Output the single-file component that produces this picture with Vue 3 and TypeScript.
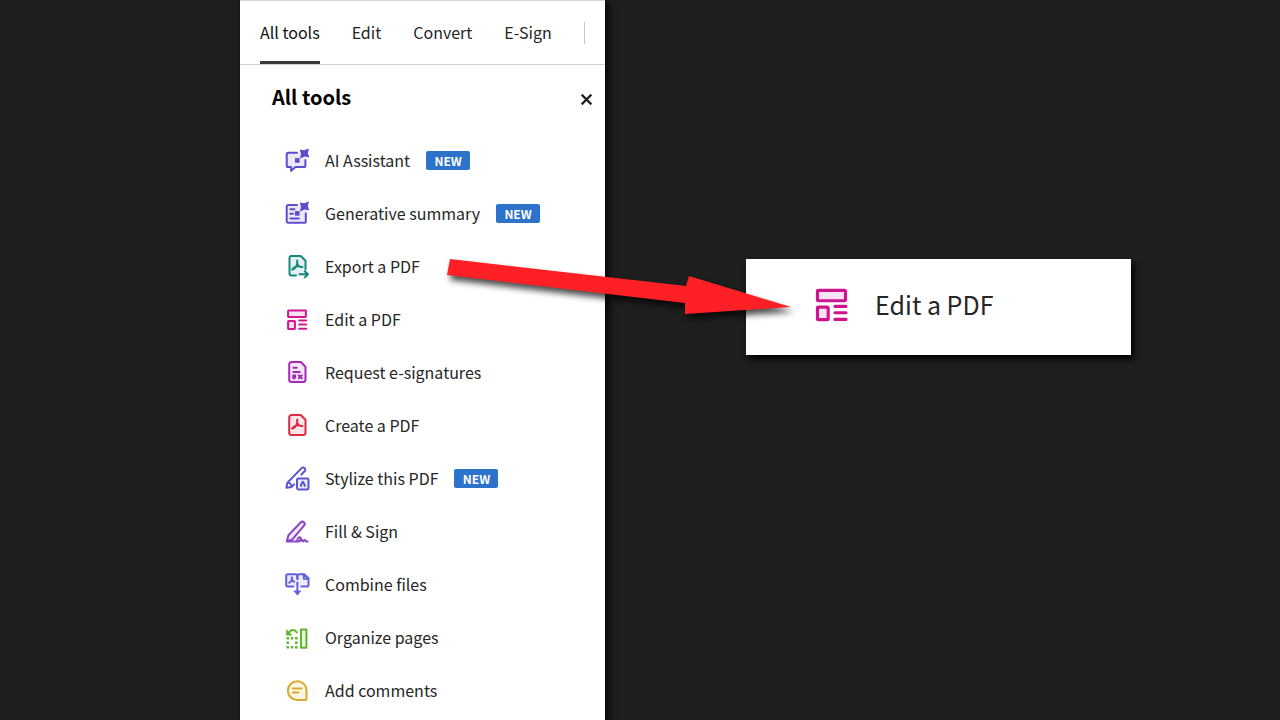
<script setup lang="ts">
import { ref } from 'vue'

interface Tool {
  id: string
  label: string
  color: string
  isNew?: boolean
  paths: string[]
  fills?: string[]
  tint?: string
}

const editPaths: string[] = [
  'M15.2 13.6h7M15.2 17.6h7M15.2 21.8h7',
]
const editShapes = 'M4.7 3.4h16.6a.6.6 0 0 1 .6.6v5.4a.6.6 0 0 1-.6.6H4.7a.6.6 0 0 1-.6-.6V4a.6.6 0 0 1 .6-.6ZM4.7 14h5.6a.6.6 0 0 1 .6.6v6.8a.6.6 0 0 1-.6.6H4.7a.6.6 0 0 1-.6-.6v-6.8a.6.6 0 0 1 .6-.6Z'
const star = 'M15.8 1.4l4.3.9 4.9-1.9-1.2 4.5 1.5 4.7-4.6-1-4.8 1.8 1-4.4z'
const spark = 'M11 10.1h4.6v4.6H11Z'
const acrobat = 'M13.2 6.4v3c0 2.3-3 6-5 6.2M13.2 9.4c.6 2.6 2.8 3.8 5.2 3.6M9.4 14c2.4-1.6 4.6-2 7.2-1.4'
const page = 'M7.5 2h9.3l4.7 4.7v13a2.3 2.3 0 0 1-2.3 2.3H7.5a2.3 2.3 0 0 1-2.3-2.3V4.3A2.3 2.3 0 0 1 7.5 2Z'

const tools: Tool[] = [
  {
    id: 'ai', label: 'AI Assistant', color: '#5b4cd0', isNew: true,
    tint: 'M3 5h13v4h6v10H12l-4 3v-3H3Z',
    paths: ['M13 4.8H4.3A1.6 1.6 0 0 0 2.7 6.4v11a1.6 1.6 0 0 0 1.6 1.6h2.8v3.7l4.4-3.7h8.3a1.6 1.6 0 0 0 1.6-1.6v-5.4'],
    fills: [star, spark],
  },
  {
    id: 'summary', label: 'Generative summary', color: '#5b4cd0', isNew: true,
    tint: 'M3 4h13v5h6v13H3Z',
    paths: ['M13 4H4.3a1.6 1.6 0 0 0-1.6 1.6v14.6a1.6 1.6 0 0 0 1.6 1.6h15.9a1.6 1.6 0 0 0 1.6-1.6v-8', 'M6.4 8.2h4M6.4 12.8h2.6M6.4 17.5h8.4'],
    fills: [star, spark],
  },
  {
    id: 'export', label: 'Export a PDF', color: '#16877f',
    tint: page,
    paths: ['M12 21.5H7.5a2 2 0 0 1-2-2V4a2 2 0 0 1 2-2h9.2l4.8 4.7v8.5', acrobat, 'M15.5 20.3h8M20.8 17.2l3.2 3.1-3.2 3.1'],
  },
  { id: 'edit', label: 'Edit a PDF', color: '#d51492', tint: editShapes, paths: [editShapes, ...editPaths] },
  {
    id: 'request', label: 'Request e-signatures', color: '#a52bb7',
    tint: page,
    paths: [page, 'M9.4 7.7h3.4M9.4 12h6.4', 'M14.8 15.4l3 3M17.8 15.4l-3 3'],
    fills: ['M8.2 14.4h3.8v3.3L10.1 20l-1.9-2.3Z'],
  },
  { id: 'create', label: 'Create a PDF', color: '#d92b42', tint: page, paths: [page, acrobat] },
  {
    id: 'stylize', label: 'Stylize this PDF', color: '#5b57cf', isNew: true,
    tint: 'M14 12h10v11H14Z',
    paths: [
      'M2.4 21.7l1-5L17.6 2.1c1-.9 2.3-.7 3.1.2.8.9.8 2-.1 3l-3.2 3.2M3.4 16.7c1.7-.5 4.5 1.8 4.3 4.2l-5.3.8M7.7 20.9l2.5-2.5',
      'M14.3 12.5h8.9a1.3 1.3 0 0 1 1.3 1.3v8.3a1.3 1.3 0 0 1-1.3 1.3h-8.9a1.3 1.3 0 0 1-1.3-1.3v-8.3a1.3 1.3 0 0 1 1.3-1.3Z',
      'M17 20v-1.3l1.8-3 1.8 3V20',
    ],
  },
  {
    id: 'fill', label: 'Fill & Sign', color: '#8a48c8',
    tint: 'M3 22l1.5-6L17 3l4 2L9 20Z',
    paths: ['M2.8 22.4l1.6-6.2L16.6 3.5c1.1-1.1 2.5-1 3.4-.2.9.9.9 2.2 0 3.3L8.4 20.4l-5.6 2h11.4', 'M13.2 22.2c-.4-2.6 2.2-5 3.4-3.5 1 1.5-1.6 3.6-1.6 3.6 2.2.2 2.2-1.8 3.1-1.5.8.4.1 1.6 1 1.6s.8-1.3 1.7-1.3.7 1.3 1.4 1.3h1.4'],
  },
  {
    id: 'combine', label: 'Combine files', color: '#6260d8',
    tint: 'M3 3h17l4 4v7H3Z',
    paths: ['M9.5 14.5H3.7a1.5 1.5 0 0 1-1.5-1.5V3.7a1.5 1.5 0 0 1 1.5-1.5h8a1.7 1.7 0 0 1 1.7 1.7v3.2', 'M13.4 7.1V3.9a1.7 1.7 0 0 1 1.7-1.7h5.2l4.2 4.1V13a1.5 1.5 0 0 1-1.5 1.5h-5.7M19.8 2.6v4.1h4.3', 'M13.4 10.5v11', 'M7.8 5.2v2c0 1.5-1.5 3.3-2.6 3.6M7.8 7.2c.6 1.5 1.4 2.3 2.4 2.5'],
    fills: ['M9.3 18.4h8.2l-4.1 5Z'],
  },
  {
    id: 'organize', label: 'Organize pages', color: '#5eb62c',
    tint: 'M17 5h6v17h-6Z',
    paths: ['M17 4.5h5.4v18.3H17Z', 'M5 7.6c1.6-3.2 6-3.4 7.8-.2'],
    fills: [
      'M2.2 4v6.4h6.5Z',
      'M2.5 12h2.5v2.5H2.5ZM6.8 12h2.5v2.5H6.8ZM11.1 12h2.5v2.5h-2.5Z',
      'M2.5 16.5h2.5V19H2.5ZM11.1 16.5h2.5V19h-2.5Z',
      'M2.5 21h2.5v2.5H2.5ZM6.8 21h2.5v2.5H6.8ZM11.1 21h2.5v2.5h-2.5Z',
    ],
  },
  {
    id: 'comments', label: 'Add comments', color: '#d9a92b',
    tint: 'M13.3 3.3a9.3 9.3 0 0 1 9.3 9.3v9.5h-9.3a9.3 9.3 0 0 1 0-18.8Z',
    paths: ['M13.3 3.2a9.2 9.2 0 0 1 9.2 9.2v8.6a1.1 1.1 0 0 1-1.1 1.1h-8.1a9.45 9.45 0 0 1 0-18.9Z', 'M9 10.5h8.6M9 14.6h5.6'],
  },
]

const tabs = ['All tools', 'Edit', 'Convert', 'E-Sign']
const activeTab = ref('All tools')
</script>

<template>
  <main class="stage">
    <section class="panel">
      <nav class="tabs" aria-label="Tool categories">
        <button
          v-for="tab in tabs"
          :key="tab"
          type="button"
          class="tab"
          :class="{ active: tab === activeTab }"
          @click="activeTab = tab"
        >{{ tab }}</button>
        <span class="divider"></span>
      </nav>
      <header class="heading">
        <h1>All tools</h1>
        <button type="button" class="close" aria-label="Close">
          <svg viewBox="0 0 12 12"><path d="M1.5 1.5l9 9M10.5 1.5l-9 9" /></svg>
        </button>
      </header>
      <ul class="tools">
        <li v-for="tool in tools" :key="tool.id">
          <button type="button" class="tool">
            <svg class="icon" viewBox="0 0 26 26" :style="{ color: tool.color }" aria-hidden="true">
              <path v-if="tool.tint" class="tint" :d="tool.tint" />
              <path v-for="d in tool.paths" :key="d" class="line" :d="d" />
              <path v-for="d in tool.fills" :key="d" class="solid" :d="d" />
            </svg>
            <span class="label">{{ tool.label }}</span>
            <span v-if="tool.isNew" class="badge">NEW</span>
          </button>
        </li>
      </ul>
    </section>
    <section class="detail">
      <button type="button" class="callout">
        <svg class="icon large" viewBox="0 0 26 26" aria-hidden="true">
          <path class="tint" :d="editShapes" />
          <path class="line" :d="editShapes" />
          <path v-for="d in editPaths" :key="d" class="line" :d="d" />
        </svg>
        <span class="label">Edit a PDF</span>
      </button>
    </section>
    <svg class="arrow" viewBox="0 0 360 70" aria-hidden="true">
      <polygon points="10,9 246,36 249,26 351,57 245,64 245,53 7,25" />
    </svg>
  </main>
</template>

<style>
body {
  margin: 0;
  background: #1d1f1e;
}
</style>

<style scoped>
.stage {
  position: relative;
  display: grid;
  grid-template-columns: 35.1% 1fr;
  min-height: 100vh;
  padding-left: 18.75%;
  box-sizing: border-box;
  overflow: hidden;
  background: #1d1f1e;
  color: #262626;
  font-family: "Noto Sans CJK SC", "Noto Sans", sans-serif;
}
button {
  margin: 0;
  padding: 0;
  border: 0;
  background: none;
  color: inherit;
  font: inherit;
  text-align: left;
  cursor: pointer;
}
.panel {
  box-sizing: border-box;
  border-top: 1px solid #d5d5d5;
  background: #fff;
  box-shadow: 3px 3px 8px #000;
}
.tabs {
  display: flex;
  align-items: center;
  gap: 32px;
  height: 63px;
  padding-left: 20px;
  border-bottom: 1px solid #cfcfcf;
}
.tab {
  height: 63px;
  box-sizing: border-box;
  padding-top: 2px;
  border-bottom: 3px solid transparent;
  font-size: 16px;
  line-height: 24px;
  white-space: nowrap;
}
.tab.active {
  border-bottom-color: #393939;
  color: #111;
}
.divider {
  width: 1px;
  height: 22px;
  background: #c4c4c4;
}
.heading {
  display: flex;
  align-items: center;
  justify-content: space-between;
  height: 63px;
  padding: 0 12px 6px 32px;
}
h1 {
  margin: 0;
  color: #000;
  font-size: 20px;
  font-weight: 700;
  line-height: 28px;
}
.close {
  display: flex;
  padding: 5px 0 0;
}
.close svg {
  width: 13px;
  height: 13px;
  fill: none;
  stroke: #222;
  stroke-width: 2;
}
.tools {
  margin: 0;
  padding: 0;
  list-style: none;
}
.tool {
  display: flex;
  align-items: center;
  width: 100%;
  height: 53px;
  padding-left: 44px;
  font-size: 16px;
  line-height: 24px;
  white-space: nowrap;
}
.label {
  padding-bottom: 2px;
}
.icon {
  flex: none;
  width: 26px;
  height: 26px;
  margin-right: 15px;
}
.tint {
  fill: currentColor;
  opacity: 0.12;
}
.line {
  fill: none;
  stroke: currentColor;
  stroke-width: 2;
  stroke-linecap: round;
  stroke-linejoin: round;
}
.solid {
  fill: currentColor;
}
.badge {
  width: 44px;
  height: 19px;
  margin-left: 16px;
  border-radius: 2px;
  background: #2d72cb;
  color: #fff;
  font-size: 12px;
  font-weight: 700;
  line-height: 19px;
  text-align: center;
}
.detail {
  padding: 259px 0 0 20.9%;
}
.callout {
  display: flex;
  align-items: center;
  box-sizing: border-box;
  width: 72%;
  height: 96px;
  padding: 0 0 4px 65px;
  background: #fff;
  box-shadow: 3px 4px 6px #000;
  font-size: 25px;
  line-height: 36px;
  white-space: nowrap;
}
.icon.large {
  width: 41px;
  height: 41px;
  margin-right: 23px;
  color: #cf138e;
}
.arrow {
  position: absolute;
  top: 250px;
  left: 440px;
  width: 360px;
  height: 70px;
  overflow: visible;
  fill: #fe2024;
  filter: drop-shadow(3px 5px 3px rgba(0, 0, 0, 0.7));
  pointer-events: none;
}
</style>
